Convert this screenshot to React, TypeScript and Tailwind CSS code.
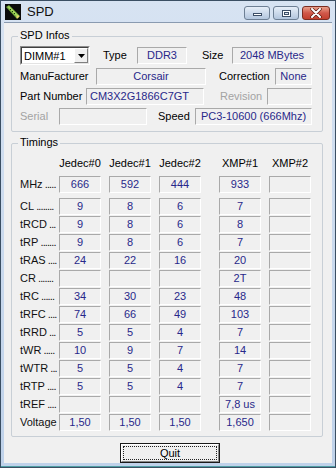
import type { ReactNode } from 'react'

const FONT = { fontFamily: '"Liberation Sans", Arial, sans-serif' }

function Field({
  children,
  className = '',
  left,
}: {
  children?: ReactNode
  className?: string
  left?: boolean
}) {
  return (
    <div
      className={`h-[17px] shrink-0 flex items-center border border-t-[#a9a9a9] border-l-[#a9a9a9] border-b-white border-r-white bg-[#f0f0f0] text-[11px] leading-none text-[#28288a] whitespace-nowrap overflow-hidden ${
        left ? 'justify-start pl-[3px]' : 'justify-center'
      } ${className}`}
    >
      {children}
    </div>
  )
}

function Label({ children, className = '' }: { children: ReactNode; className?: string }) {
  return (
    <span className={`shrink-0 text-[11px] leading-none whitespace-nowrap ${className}`}>{children}</span>
  )
}

// label, dot count, values
const timings: [string, number, string[]][] = [
  ['CL', 8, ['9', '8', '6', '7', '']],
  ['tRCD', 3, ['9', '8', '6', '8', '']],
  ['tRP', 7, ['9', '8', '6', '7', '']],
  ['tRAS', 4, ['24', '22', '16', '20', '']],
  ['CR', 7, ['', '', '', '2T', '']],
  ['tRC', 6, ['34', '30', '23', '48', '']],
  ['tRFC', 4, ['74', '66', '49', '103', '']],
  ['tRRD', 3, ['5', '5', '4', '7', '']],
  ['tWR', 5, ['10', '9', '7', '14', '']],
  ['tWTR', 3, ['5', '5', '4', '7', '']],
  ['tRTP', 4, ['5', '5', '4', '7', '']],
  ['tREF', 4, ['', '', '', '7,8 us', '']],
  ['Voltage', 0, ['1,50', '1,50', '1,50', '1,650', '']],
]

function TimingRow({
  label,
  dots,
  values,
  className = '',
}: {
  label: string
  dots: number
  values: string[]
  className?: string
}) {
  return (
    <div className={`flex items-center h-[17px] ${className}`}>
      <span className="w-[39px] shrink-0 whitespace-nowrap text-[11px] leading-none text-[#111]">
        {label}
        {dots > 0 && <span className="tracking-[-0.9px]"> {'.'.repeat(dots)}</span>}
      </span>
      <Field className="w-[42px]">{values[0]}</Field>
      <Field className="w-[42px] ml-[8px]">{values[1]}</Field>
      <Field className="w-[42px] ml-[8px]">{values[2]}</Field>
      <Field className="w-[42px] ml-[18px]">{values[3]}</Field>
      <Field className="w-[42px] ml-[8px]">{values[4]}</Field>
    </div>
  )
}

function RamIcon() {
  return (
    <svg width="16" height="16" viewBox="0 0 16 16">
      <rect width="16" height="16" fill="#0b0b0b" />
      <path d="M1 3 L4 1 L15 12 L12 15 Z" fill="#6fa33a" />
      <path d="M2.5 3 L4 2 L14 12 L12.5 13.5 Z" fill="#a6d65a" />
      <path d="M5 6 L6 5 M7 8 L8 7 M9 10 L10 9" stroke="#1c3a10" strokeWidth="1" />
      <path d="M11 13 L13 11 L14.5 12.5 L12.5 14.5 Z" fill="#e8d36a" />
    </svg>
  )
}

export default function App() {
  return (
    <div
      className="w-[336px] h-[468px] flex flex-col bg-gradient-to-b from-[#d7e3f2] to-[#bfd2ea] border border-[#3b4f63] text-black overflow-hidden"
      style={FONT}
    >
      {/* Title bar */}
      <div className="h-[21px] shrink-0 flex items-center pl-[4px] pr-[5px]">
        <RamIcon />
        <span className="ml-[6px] text-[13px] leading-none text-[#111]">SPD</span>
        <div className="ml-auto flex items-center gap-[3px] mt-[3px]">
          <div className="w-[26px] h-[14px] rounded-[3px] border border-[#6d7f94] bg-gradient-to-b from-[#e6eef8] to-[#b3c6de] flex items-end justify-center pb-[3px]">
            <div className="w-[9px] h-[3px] bg-white border border-[#3c4e66]" />
          </div>
          <div className="w-[26px] h-[14px] rounded-[3px] border border-[#6d7f94] bg-gradient-to-b from-[#e6eef8] to-[#b3c6de] flex items-center justify-center">
            <div className="w-[9px] h-[7px] bg-white border border-[#3c4e66] flex items-center justify-center">
              <div className="w-[5px] h-[3px] border border-[#3c4e66] bg-[#dde6f2]" />
            </div>
          </div>
          <div className="w-[28px] h-[14px] rounded-[3px] border border-[#7a2d22] bg-gradient-to-b from-[#e8a08c] via-[#d0584a] to-[#c3402e] flex items-center justify-center">
            <svg width="12" height="10" viewBox="0 0 12 10">
              <path d="M2 1 L10 9 M10 1 L2 9" stroke="#5a1a10" strokeWidth="3.4" strokeLinecap="round" />
              <path d="M2 1 L10 9 M10 1 L2 9" stroke="#fff" strokeWidth="2" strokeLinecap="round" />
            </svg>
          </div>
        </div>
      </div>

      {/* Client area */}
      <div className="flex-1 mx-[3px] mb-[3px] bg-[#f0f0f0] border-t border-[#8a9bb0] flex flex-col">
        {/* SPD Infos */}
        <div className="relative ml-[7px] mt-[13px] w-[312px] h-[96px] shrink-0 border border-[#c8cfd6] rounded-[2px] pl-[8px] pt-[9px]">
          <span className="absolute -top-[7px] left-[6px] px-[2px] bg-[#f0f0f0] text-[11px] leading-none">
            SPD Infos
          </span>

          <div className="flex items-center h-[19px]">
            <div className="w-[70px] h-[19px] shrink-0 flex border border-t-[#8c8c8c] border-l-[#8c8c8c] border-b-white border-r-white">
              <div className="flex-1 flex border border-t-[#404040] border-l-[#404040] border-b-[#e3e3e3] border-r-[#e3e3e3] bg-white">
                <span className="flex-1 text-[11px] leading-none pl-[2px] pt-[3px] text-black">DIMM#1</span>
                <div className="w-[14px] flex items-center justify-center bg-[#f0f0f0] border border-t-white border-l-white border-b-[#808080] border-r-[#808080]">
                  <svg width="7" height="4" viewBox="0 0 7 4">
                    <path d="M0 0 H7 L3.5 4 Z" fill="#000" />
                  </svg>
                </div>
              </div>
            </div>
            <Label className="w-[47px] pl-[13px]">Type</Label>
            <Field className="w-[50px]">DDR3</Field>
            <Label className="w-[45px] pl-[15px]">Size</Label>
            <Field className="w-[80px]">2048 MBytes</Field>
          </div>

          <div className="flex items-center mt-[3px]">
            <Label className="w-[76px]">ManuFacturer</Label>
            <Field className="w-[110px]">Corsair</Field>
            <Label className="w-[69px] pl-[13px]">Correction</Label>
            <Field className="w-[37px]">None</Field>
          </div>

          <div className="flex items-center mt-[3px]">
            <Label className="w-[66px]">Part Number</Label>
            <Field className="w-[118px]" left>
              CM3X2G1866C7GT
            </Field>
            <Label className="w-[63px] pl-[16px] text-[#a3a3a3]">Revision</Label>
            <Field className="w-[45px]" />
          </div>

          <div className="flex items-center mt-[3px]">
            <Label className="w-[39px] text-[#a3a3a3]">Serial</Label>
            <Field className="w-[88px]" />
            <Label className="w-[48px] pl-[11px]">Speed</Label>
            <Field className="w-[117px]">PC3-10600 (666Mhz)</Field>
          </div>
        </div>

        {/* Timings */}
        <div className="relative ml-[7px] mt-[11px] w-[312px] h-[294px] shrink-0 border border-[#c8cfd6] rounded-[2px] pl-[8px] pt-[13px]">
          <span className="absolute -top-[7px] left-[6px] px-[2px] bg-[#f0f0f0] text-[11px] leading-none">
            Timings
          </span>

          <div className="flex items-center h-[13px] text-[11px] leading-none">
            <span className="w-[39px] shrink-0" />
            <span className="w-[42px] text-center whitespace-nowrap">Jedec#0</span>
            <span className="w-[42px] ml-[8px] text-center whitespace-nowrap">Jedec#1</span>
            <span className="w-[42px] ml-[8px] text-center whitespace-nowrap">Jedec#2</span>
            <span className="w-[42px] ml-[18px] text-center">XMP#1</span>
            <span className="w-[42px] ml-[8px] text-center">XMP#2</span>
          </div>

          <TimingRow label="MHz" dots={5} values={['666', '592', '444', '933', '']} className="mt-[6px]" />
          {timings.map(([label, dots, values], i) => (
            <TimingRow
              key={label}
              label={label}
              dots={dots}
              values={values}
              className={i === 0 ? 'mt-[5px]' : 'mt-[1px]'}
            />
          ))}
        </div>

        {/* Quit */}
        <div className="flex justify-center mt-[6px] ml-[4px]">
          <button className="w-[100px] h-[20px] border border-[#1a1a1a] bg-[#f0f0f0] p-0">
            <div className="w-full h-full border border-t-white border-l-white border-b-[#888] border-r-[#888] p-[1px]">
              <div className="w-full h-full border border-dotted border-[#222] flex items-center justify-center text-[11px] leading-none text-black">
                Quit
              </div>
            </div>
          </button>
        </div>
      </div>
      <div className="h-[2px] shrink-0 bg-[#4f9ea4]" />
    </div>
  )
}
